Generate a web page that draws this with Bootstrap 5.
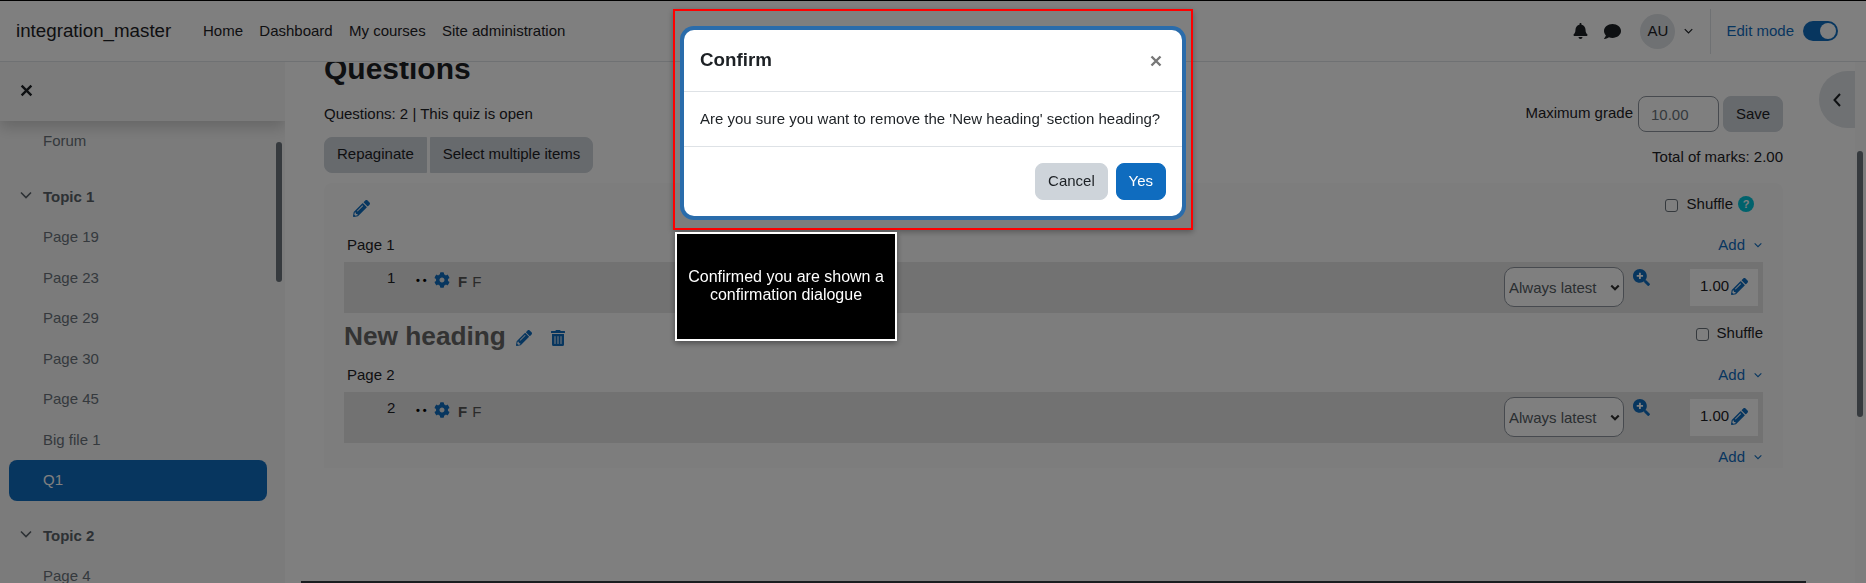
<!DOCTYPE html>
<html lang="en">
<head>
<meta charset="utf-8">
<title>Questions</title>
<link href="https://cdn.jsdelivr.net/npm/bootstrap@5.3.0/dist/css/bootstrap.min.css" rel="stylesheet">
<style>
html,body{height:583px;overflow:hidden}
body{font-family:"Liberation Sans",Arial,sans-serif;font-size:15px;line-height:22.5px;color:#1d2125;background:#fff;border-top:1px solid #000}
.btn{font-size:15px;line-height:22.5px;border-radius:8px;padding:6px 12px}
.btn-soft{background:#ced4da;border-color:#ced4da;color:#1d2125}
.btn-moodle{background:#0f6cbf;border-color:#0f6cbf;color:#fff}
a{color:#1d2125;text-decoration:none}
.ico{fill:currentColor;display:block;flex:none}
.blue{color:#0f6cbf}
.topbar{height:61px;border-bottom:1px solid #dee2e6;background:#fff;padding-left:16px;padding-right:28px}
.brandname{font-size:18.75px;color:#1d2125;width:171px;margin-right:16px}
.toplink{margin-right:16.3px}
.bell-wrap{color:#1d2125}
.avatar-round{width:35px;height:35px;border-radius:50%;background:#dee2e6;color:#1d2125;margin-left:19px}
.avatar-chev{margin-left:9px}
.split{width:1px;height:45px;background:#dee2e6;margin:0 15px 0 17px}
.toggle-pill{width:35px;height:20px;border-radius:10px;background:#0f6cbf;margin-left:9px;padding:2px}
.toggle-knob{width:16px;height:16px;border-radius:50%;background:#fff;margin-left:auto}
.shell{height:521px}
.sidepane{width:285px;background:#f7f7f7;position:relative;overflow:hidden;flex:none}
.sidehead{height:59px;background:#f7f7f7;padding:0 0 3px 20px;box-shadow:0 6px 14px rgba(0,0,0,.18);position:relative;z-index:2}
.sidelist{color:#6a737b}
.sideitem{height:40.5px;padding:9px 0 9px 43px}
.sidesec{height:40.5px;padding:9px 0 0 20px;margin-top:15px;font-weight:700;color:#5a6269}
.sidesec svg{margin-right:11px;margin-top:5px}
.sideactive{background:#0f6cbf;color:#fff;border-radius:8px;margin:0 18px 0 9px;padding-left:34px}
.sidebarthumb{position:absolute;left:276px;top:80px;width:6px;height:140px;border-radius:3px;background:#6c757d}
.centerpane{min-width:0;padding:0 72px 0 39px;overflow:hidden;position:relative}
.bigtitle{font-size:30px;line-height:36px;font-weight:700;margin:-11px 0 9px}
.topinfo{padding-top:7px}
.btnpair{margin-top:11px}
.btnpair .btn{padding:5px 12px 7px}
.btn-left{border-radius:8px 0 0 8px;margin-right:3px}
.btn-right{border-radius:0 8px 8px 0}
.gradelabel{margin-bottom:2px}
.gradeinput{width:81px;height:36px;border:1px solid #8f959e;border-radius:8px;background:#fff;color:#6a737b;padding:0 12px;margin:0 4px 0 5px;font-size:15px}
.savebtn{width:60px;height:36px;padding:0}
.totalmarks{margin-top:14px;text-align:right}
.editbox{background:#fafafb;margin-top:10px;padding:0 20px;height:285px;border-radius:8px 8px 0 0;flex:none}
.boxtop{height:51px}
.boxpencil{margin:17px 0 0 9px}
.shufflewrap{margin:10px 9px 0 0}
.tick{width:13px;height:13px;border:1px solid #6a737b;border-radius:3px;background:#fff;margin:2px 9px 0 0;flex:none}
.helpdot{width:16px;height:16px;border-radius:50%;background:#00c4d8;color:#fff;font-size:11px;font-weight:700;line-height:16px;text-align:center;margin-left:5px}
.pagerow{height:22.5px;margin-bottom:5.5px;padding-left:3px}
.addlink{color:#0f6cbf;margin-left:auto}
.addlink svg{margin:0 1px 3px 9px}
.qrow{height:51px;background:#e4e4e4;padding:5px 5px 0 43px}
.qnum{width:29px}
.qdots{width:18px;font-size:11px;letter-spacing:3px;font-weight:700;margin-top:2px;color:#000}
.qgear{margin:5px 8px 0 0}
.qf{margin-top:4px;color:#555}
.qf b{margin-right:5px}
.versel{width:120px;height:40px;border:1px solid #8f959e;border-radius:10px;background-color:#fff;color:#555c63;font-size:15px;padding:2px 0 0 4px;background-image:url("data:image/svg+xml,%3csvg xmlns='http://www.w3.org/2000/svg' viewBox='0 0 12 8'%3e%3cpath fill='none' stroke='%23333' stroke-width='2.6' d='M1.5 1.5l4.5 4.5 4.5-4.5'/%3e%3c/svg%3e");background-position:right 3px center;background-size:10px 7px}
.zoomicon{margin:2px 40px 0 9px}
.gradebox{width:68px;height:37px;margin-top:2px;background:#fff;padding:0 0 2px 10px}
.gradepen{margin:0 10px 0 auto}
.headrow{height:51px;padding-top:8px}
.sectitle{font-size:26.25px;line-height:31.5px;font-weight:700;color:#666;margin:0 10px 0 0}
.headpen{margin-top:9px}
.headbin{margin:9px 0 0 19px}
.headshuffle{margin-left:auto;margin-top:1px}
.headshuffle .tick{margin-right:8px}
.bottomadd{padding-top:3px}
.blackfoot{height:2px;background:#343a40;margin:auto -23px 0;flex:none}
.rightrail{width:11px;position:relative;flex:none;background:#fbfbfb}
.railthumb{width:6px;height:266px;background:#6c757d;border-radius:3px;margin:89px 0 0 2px}
.drawerbtn{position:absolute;left:1819px;top:71px;width:36px;height:57px;background:#dee2e6;border-radius:29px 0 0 29px}
.backshade{position:fixed;inset:0;background:rgba(0,0,0,.5);z-index:10}
.redframe{position:fixed;left:673px;top:9px;width:520px;height:221px;border:2px solid #f00;box-shadow:0 2px 6px rgba(0,0,0,.3);z-index:20;padding:19px 9px 0}
.dlg{width:498px;height:186px;background:#fff;border:0;border-radius:10px;box-shadow:0 0 0 4px #2a6cab;display:flex;flex-direction:column}
.dlghead{height:62px;padding:0 16px;border-bottom:1px solid #dee2e6}
.dlgtitle{font-size:18.75px;line-height:22.5px;font-weight:700;margin:0}
.dlgbody{height:55px;padding:0 16px;border-bottom:1px solid #dee2e6}
.dlgfoot{padding:16px 16px 0;gap:8px}
.dlgfoot .btn{height:37px}
.dlgfoot .btn-soft{padding:6px 11.75px}
.dlgclose{color:#777;margin-right:4px}
.noteframe{position:fixed;left:675px;top:232px;width:222px;height:109px;background:#000;border:2px solid #fff;color:#fff;font-size:16px;line-height:18px;text-align:center;box-shadow:0 2px 6px rgba(0,0,0,.4);z-index:20;padding:0 8px 2px}
</style>
</head>
<body>
<svg width="0" height="0" class="position-absolute">
<defs>
<symbol id="pen" viewBox="0 0 512 512"><path d="M497.9 142.1l-46.1 46.1c-4.7 4.7-12.3 4.7-17 0l-111-111c-4.7-4.7-4.7-12.3 0-17l46.1-46.1c18.7-18.7 49.1-18.7 67.9 0l60.1 60.1c18.8 18.7 18.8 49.1 0 67.9zM284.2 99.8L21.6 362.4.4 483.9c-2.9 16.4 11.4 30.6 27.8 27.8l121.5-21.3 262.6-262.6c4.7-4.7 4.7-12.3 0-17l-111-111c-4.8-4.7-12.4-4.7-17.1 0zM124.1 339.9c-5.5-5.5-5.5-14.3 0-19.8l154-154c5.5-5.5 14.3-5.5 19.8 0s5.5 14.3 0 19.8l-154 154c-5.5 5.5-14.3 5.5-19.8 0zM88 424h48v36.3l-64.5 11.3-31.1-31.1L51.7 376H88v48z"/></symbol>
<symbol id="gear" viewBox="0 0 512 512"><path d="M487.4 315.7l-42.6-24.6c4.3-23.2 4.3-47 0-70.2l42.6-24.6c4.9-2.8 7.1-8.6 5.5-14-11.1-35.6-30-67.8-54.7-94.6-3.8-4.1-10-5.1-14.8-2.3L380.8 110c-17.9-15.4-38.5-27.3-60.8-35.1V25.8c0-5.6-3.9-10.5-9.4-11.7-36.7-8.2-74.3-7.8-109.2 0-5.5 1.2-9.4 6.1-9.4 11.7V75c-22.2 7.9-42.8 19.8-60.8 35.1L88.7 85.5c-4.9-2.8-11-1.9-14.8 2.3-24.7 26.7-43.6 58.9-54.7 94.6-1.7 5.4.6 11.2 5.5 14L67.3 221c-4.3 23.2-4.3 47 0 70.2l-42.6 24.6c-4.9 2.8-7.1 8.6-5.5 14 11.1 35.6 30 67.8 54.7 94.6 3.8 4.1 10 5.1 14.8 2.3l42.6-24.6c17.9 15.4 38.5 27.3 60.8 35.1v49.2c0 5.6 3.9 10.5 9.4 11.7 36.7 8.2 74.3 7.8 109.2 0 5.5-1.2 9.4-6.1 9.4-11.7v-49.2c22.2-7.9 42.8-19.8 60.8-35.1l42.6 24.6c4.9 2.8 11 1.9 14.8-2.3 24.7-26.7 43.6-58.9 54.7-94.6 1.5-5.5-.7-11.3-5.6-14.1zM256 336c-44.1 0-80-35.9-80-80s35.9-80 80-80 80 35.9 80 80-35.9 80-80 80z"/></symbol>
<symbol id="bell" viewBox="0 0 448 512"><path d="M224 512c35.32 0 63.97-28.65 63.97-64H160.03c0 35.35 28.65 64 63.97 64zm215.39-149.71c-19.32-20.76-55.47-51.99-55.47-154.29 0-77.7-54.48-139.9-127.94-155.16V32c0-17.67-14.32-32-31.98-32s-31.98 14.33-31.98 32v20.84C118.56 68.1 64.08 130.3 64.08 208c0 102.3-36.15 133.53-55.47 154.29-6 6.45-8.66 14.16-8.61 21.71.11 16.4 12.98 32 32.1 32h383.8c19.12 0 32-15.6 32.1-32 .05-7.55-2.61-15.27-8.61-21.71z"/></symbol>
<symbol id="chat" viewBox="0 0 512 512"><path d="M256 32C114.6 32 0 125.1 0 240c0 49.6 21.4 95 57 130.7C44.5 421.1 2.7 466 2.2 466.5c-2.2 2.3-2.8 5.7-1.5 8.7S4.8 480 8 480c66.3 0 116-31.8 140.6-51.4 32.7 12.3 69 19.4 107.4 19.4 141.4 0 256-93.1 256-208S397.4 32 256 32z"/></symbol>
<symbol id="zoomplus" viewBox="0 0 512 512"><path d="M505 476.7L476.7 505c-9.4 9.4-24.6 9.4-33.9 0L343 405.3c-4.5-4.5-7-10.6-7-17V372c-35.3 27.6-79.7 44-128 44C93.1 416 0 322.9 0 208S93.1 0 208 0s208 93.1 208 208c0 48.3-16.4 92.7-44 128h16.3c6.4 0 12.5 2.5 17 7l99.7 99.7c9.3 9.4 9.3 24.6 0 34z"/><path fill="#fff" d="M304 192v32c0 6.6-5.4 12-12 12h-56v56c0 6.6-5.4 12-12 12h-32c-6.6 0-12-5.4-12-12v-56h-56c-6.6 0-12-5.4-12-12v-32c0-6.6 5.4-12 12-12h56v-56c0-6.6 5.4-12 12-12h32c6.6 0 12 5.4 12 12v56h56c6.6 0 12 5.4 12 12z"/></symbol>
<symbol id="trash" viewBox="0 0 448 512"><path d="M32 464a48 48 0 0 0 48 48h288a48 48 0 0 0 48-48V128H32zm272-256a16 16 0 0 1 32 0v224a16 16 0 0 1-32 0zm-96 0a16 16 0 0 1 32 0v224a16 16 0 0 1-32 0zm-96 0a16 16 0 0 1 32 0v224a16 16 0 0 1-32 0zM432 32H312l-9-19a24 24 0 0 0-21.5-13h-114.3a23.72 23.72 0 0 0-21.4 13l-9 19H16A16 16 0 0 0 0 48v32a16 16 0 0 0 16 16h416a16 16 0 0 0 16-16V48a16 16 0 0 0-16-16z"/></symbol>
<symbol id="chev" viewBox="0 0 12 8"><path d="M1 1.5l5 5 5-5" fill="none" stroke="currentColor" stroke-width="1.6"/></symbol>
</defs>
</svg>

<header class="topbar d-flex align-items-center">
  <a class="brandname" href="#">integration_master</a>
  <a class="toplink" href="#">Home</a>
  <a class="toplink" href="#">Dashboard</a>
  <a class="toplink" href="#">My courses</a>
  <a class="toplink" href="#">Site administration</a>
  <div class="ms-auto d-flex align-items-center">
    <svg class="ico bell-wrap" width="15" height="16"><use href="#bell"/></svg>
    <svg class="ico bell-wrap ms-3" width="17" height="17"><use href="#chat"/></svg>
    <div class="avatar-round d-flex align-items-center justify-content-center">AU</div>
    <svg class="avatar-chev bell-wrap" width="9" height="6"><use href="#chev"/></svg>
    <div class="split"></div>
    <a class="blue" href="#">Edit mode</a>
    <div class="toggle-pill d-flex"><div class="toggle-knob"></div></div>
  </div>
</header>

<div class="shell d-flex">
  <aside class="sidepane">
    <div class="sidehead d-flex align-items-center">
      <svg width="13" height="13" viewBox="0 0 12 12" class="bell-wrap"><path d="M1.5 1.5l9 9m0-9l-9 9" stroke="currentColor" stroke-width="2.2"/></svg>
    </div>
    <div class="sidelist">
      <div class="sideitem">Forum</div>
      <div class="sidesec d-flex align-items-start"><svg width="12" height="8"><use href="#chev"/></svg>Topic 1</div>
      <div class="sideitem">Page 19</div>
      <div class="sideitem">Page 23</div>
      <div class="sideitem">Page 29</div>
      <div class="sideitem">Page 30</div>
      <div class="sideitem">Page 45</div>
      <div class="sideitem">Big file 1</div>
      <div class="sideitem sideactive">Q1</div>
      <div class="sidesec d-flex align-items-start"><svg width="12" height="8"><use href="#chev"/></svg>Topic 2</div>
      <div class="sideitem">Page 4</div>
    </div>
    <div class="sidebarthumb"></div>
  </aside>

  <main class="centerpane flex-grow-1 d-flex flex-column">
    <h2 class="bigtitle">Questions</h2>
    <div class="d-flex justify-content-between">
      <div>
        <div class="topinfo">Questions: 2 | This quiz is open</div>
        <div class="d-flex btnpair">
          <button class="btn btn-soft btn-left">Repaginate</button>
          <button class="btn btn-soft btn-right">Select multiple items</button>
        </div>
      </div>
      <div>
        <div class="d-flex align-items-center">
          <span class="gradelabel">Maximum grade</span>
          <input class="gradeinput" value="10.00">
          <button class="btn btn-soft savebtn">Save</button>
        </div>
        <div class="totalmarks">Total of marks: 2.00</div>
      </div>
    </div>

    <section class="editbox">
      <div class="boxtop d-flex justify-content-between align-items-start">
        <svg class="ico blue boxpencil" width="17" height="17"><use href="#pen"/></svg>
        <div class="shufflewrap d-flex align-items-center"><span class="tick"></span>Shuffle<span class="helpdot">?</span></div>
      </div>
      <div class="pagerow d-flex"><span>Page 1</span><a class="addlink" href="#">Add<svg width="8" height="6"><use href="#chev"/></svg></a></div>
      <div class="qrow d-flex align-items-start">
        <span class="qnum">1</span><span class="qdots">••</span>
        <svg class="ico blue qgear" width="16" height="16"><use href="#gear"/></svg>
        <span class="qf"><b>F</b>F</span>
        <div class="ms-auto d-flex align-items-start">
          <select class="form-select versel"><option>Always latest</option></select>
          <svg class="ico blue zoomicon" width="17" height="17"><use href="#zoomplus"/></svg>
          <div class="gradebox d-flex align-items-center">1.00<svg class="ico blue gradepen" width="17" height="17"><use href="#pen"/></svg></div>
        </div>
      </div>
      <div class="headrow d-flex align-items-start">
        <h3 class="sectitle">New heading</h3>
        <svg class="ico blue headpen" width="16" height="16"><use href="#pen"/></svg>
        <svg class="ico blue headbin" width="14" height="16"><use href="#trash"/></svg>
        <div class="headshuffle d-flex align-items-center"><span class="tick"></span>Shuffle</div>
      </div>
      <div class="pagerow d-flex"><span>Page 2</span><a class="addlink" href="#">Add<svg width="8" height="6"><use href="#chev"/></svg></a></div>
      <div class="qrow d-flex align-items-start">
        <span class="qnum">2</span><span class="qdots">••</span>
        <svg class="ico blue qgear" width="16" height="16"><use href="#gear"/></svg>
        <span class="qf"><b>F</b>F</span>
        <div class="ms-auto d-flex align-items-start">
          <select class="form-select versel"><option>Always latest</option></select>
          <svg class="ico blue zoomicon" width="17" height="17"><use href="#zoomplus"/></svg>
          <div class="gradebox d-flex align-items-center">1.00<svg class="ico blue gradepen" width="17" height="17"><use href="#pen"/></svg></div>
        </div>
      </div>
      <div class="bottomadd d-flex"><a class="addlink" href="#">Add<svg width="8" height="6"><use href="#chev"/></svg></a></div>
    </section>
    <div class="blackfoot"></div>
  </main>

  <div class="rightrail"><div class="railthumb"></div></div>
</div>
<div class="drawerbtn d-flex align-items-center justify-content-center">
  <svg width="10" height="16" viewBox="0 0 10 16" class="bell-wrap"><path d="M8 2L2.5 8 8 14" fill="none" stroke="currentColor" stroke-width="2"/></svg>
</div>

<div class="backshade"></div>

<div class="redframe">
  <div class="dlg">
    <div class="dlghead d-flex align-items-center justify-content-between">
      <h5 class="dlgtitle">Confirm</h5>
      <svg class="dlgclose" width="12" height="12" viewBox="0 0 12 12"><path d="M1.5 1.5l9 9m0-9l-9 9" stroke="currentColor" stroke-width="2.4"/></svg>
    </div>
    <div class="dlgbody d-flex align-items-center">Are you sure you want to remove the 'New heading' section heading?</div>
    <div class="dlgfoot d-flex justify-content-end">
      <button class="btn btn-soft">Cancel</button>
      <button class="btn btn-moodle">Yes</button>
    </div>
  </div>
</div>
<div class="noteframe d-flex align-items-center justify-content-center">Confirmed you are shown a confirmation dialogue</div>
</body>
</html>
